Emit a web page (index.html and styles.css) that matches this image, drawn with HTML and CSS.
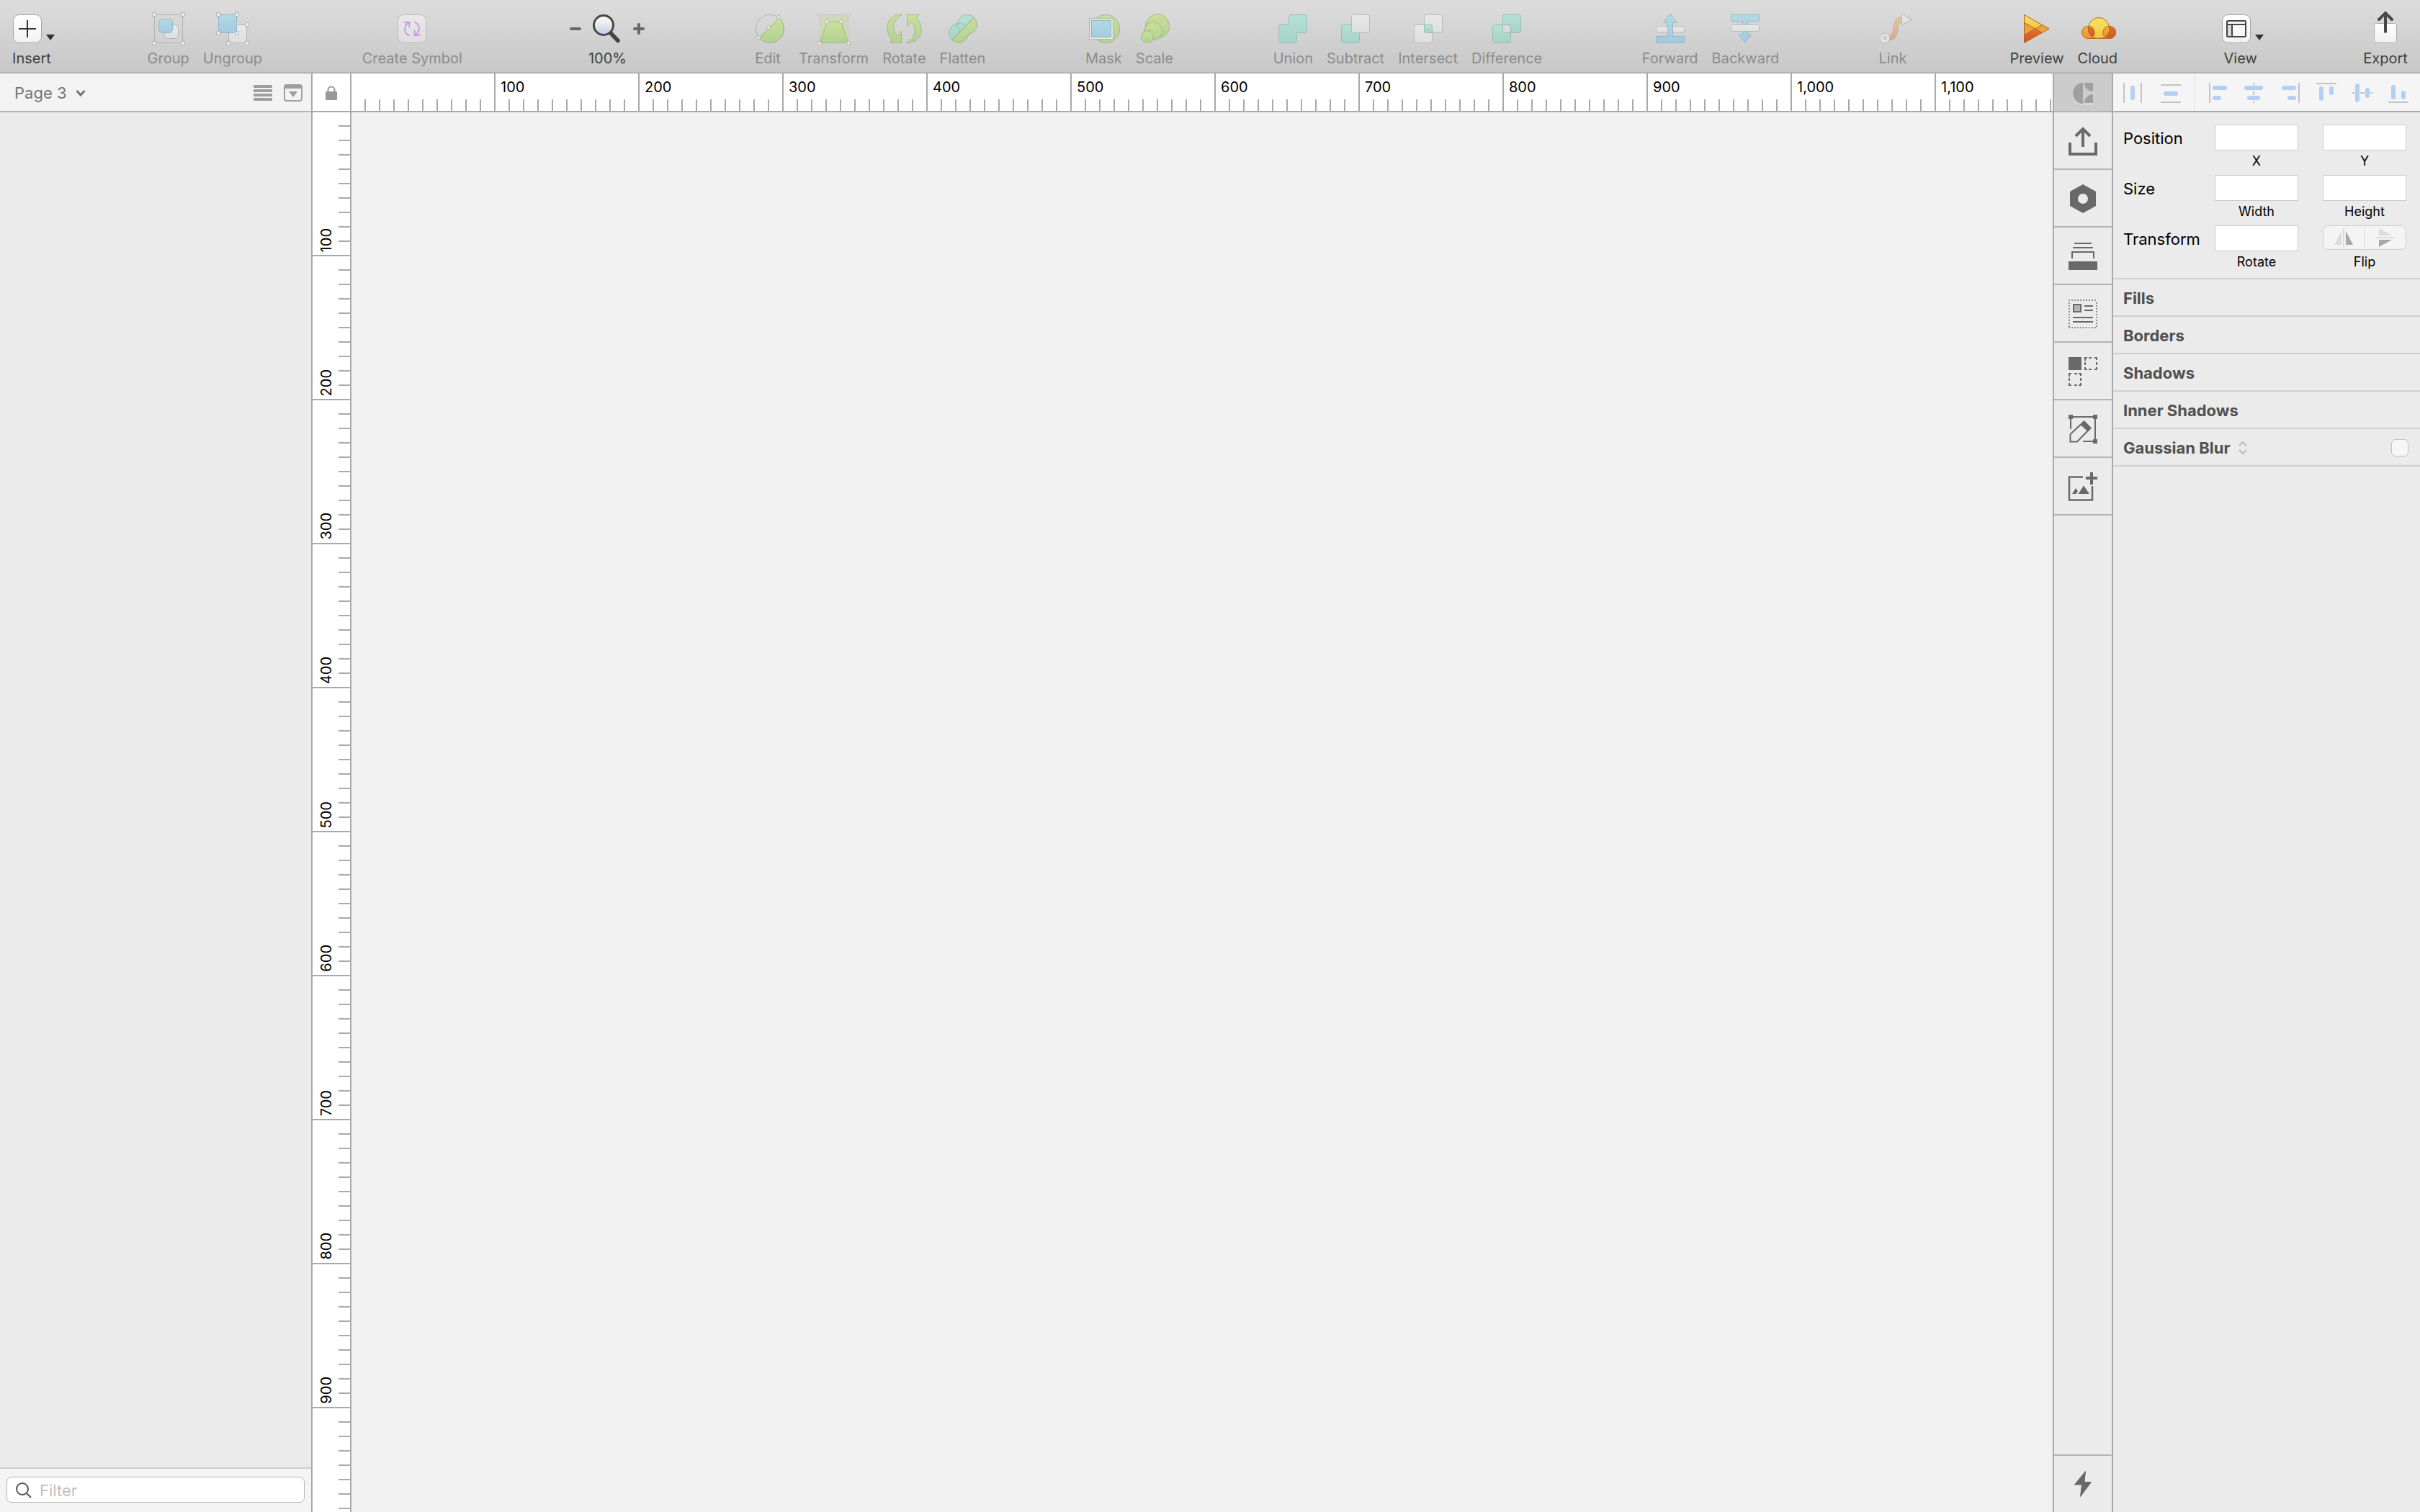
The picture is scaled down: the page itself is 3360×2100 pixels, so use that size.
FILE: index.html
```html
<!DOCTYPE html>
<html lang="en">
<head>
<meta charset="utf-8">
<title>Untitled – Page 3</title>
<link rel="stylesheet" href="styles.css">
</head>
<body>
<svg class="defs" aria-hidden="true">
  <defs>
    <linearGradient id="white" x1="0" y1="0" x2="0" y2="1"><stop offset="0" stop-color="#ffffff"/><stop offset="1" stop-color="#f1f1f1"/></linearGradient>
    <linearGradient id="grey" x1="0" y1="0" x2="0" y2="1"><stop offset="0" stop-color="#e9e9e9"/><stop offset="1" stop-color="#dedede"/></linearGradient>
    <linearGradient id="blue" x1="0" y1="0" x2="0" y2="1"><stop offset="0" stop-color="#b2dae3"/><stop offset="1" stop-color="#a3c9e2"/></linearGradient>
    <linearGradient id="green" x1="0" y1="0" x2="0" y2="1"><stop offset="0" stop-color="#cbdf9a"/><stop offset="1" stop-color="#b2d193"/></linearGradient>
    <linearGradient id="teal" x1="0" y1="0" x2="0" y2="1"><stop offset="0" stop-color="#b6e2d6"/><stop offset="1" stop-color="#a6d2c6"/></linearGradient>
    <linearGradient id="link" x1="0" y1="0" x2="0" y2="1"><stop offset="0" stop-color="#e2c795"/><stop offset="1" stop-color="#e0a98c"/></linearGradient>
    <linearGradient id="yellow" x1="0" y1="0" x2="0" y2="1"><stop offset="0" stop-color="#fbe263"/><stop offset="1" stop-color="#f3c444"/></linearGradient>
    <linearGradient id="orange" x1="0" y1="0" x2="0" y2="1"><stop offset="0" stop-color="#f2b23c"/><stop offset="1" stop-color="#ef9030"/></linearGradient>
    <linearGradient id="red" x1="0" y1="0" x2="0" y2="1"><stop offset="0" stop-color="#dd742d"/><stop offset="1" stop-color="#d25623"/></linearGradient>
    <linearGradient id="lens" x1="0" y1="0" x2="0" y2="1"><stop offset="0" stop-color="#ffffff"/><stop offset=".5" stop-color="#e6e7ea"/><stop offset="1" stop-color="#b9cff0"/></linearGradient>
    <clipPath id="flat-half"><path d="M44 4.500L6 43V48H48V4z"/></clipPath>
  </defs>
</svg>

<header class="toolbar">
  <div class="group insert">
    <button class="tool">
      <svg class="wide" viewBox="0 0 64 48"><rect x="6.500" y="4.500" width="39" height="39" rx="8" fill="url(#white)" stroke="#a3a3a3"/><path d="M14 24H38M26 12V36" stroke="#333" stroke-width="2"/><path d="M52 32H64L58 40z" fill="#333"/></svg>
      Insert
    </button>
  </div>
  <div class="group">
    <button class="tool" disabled>
      <svg viewBox="0 0 48 48" stroke="#b4b4b4"><rect x="4.500" y="4.500" width="39" height="39" fill="none"/><rect x="18.500" y="18.500" width="19" height="19" rx="5" fill="url(#grey)"/><rect x="10.500" y="10.500" width="19" height="19" rx="5" fill="url(#blue)" stroke="#95b7c8"/><path fill="#ebebeb" d="M1.500 1.500h5v5h-5zM41.500 1.500h5v5h-5zM1.500 41.500h5v5h-5zM41.500 41.500h5v5h-5z"/></svg>
      Group
    </button>
    <button class="tool" disabled>
      <svg viewBox="0 0 48 48" stroke="#b4b4b4"><rect x="18.500" y="18.500" width="25" height="25" fill="url(#grey)"/><rect x="4.500" y="4.500" width="25" height="25" fill="url(#blue)" stroke="#95b7c8"/><path fill="#ebebeb" d="M1.500 1.500h5v5h-5zM27.500 1.500h5v5h-5zM1.500 27.500h5v5h-5zM27.500 27.500h5v5h-5zM41.500 15.500h5v5h-5zM15.500 41.500h5v5h-5zM41.500 41.500h5v5h-5z"/></svg>
      Ungroup
    </button>
  </div>
  <div class="group">
    <button class="tool" disabled>
      <svg viewBox="0 0 48 48"><rect x="4.500" y="4.500" width="39" height="39" rx="8" fill="url(#grey)" stroke="#bababa"/><path d="M12.500 15H20.500V22.500M20.500 15C12 19 12 30 20.500 33.500M35.500 33H27.500V25.500M27.500 33C36 29 36 18 27.500 14.500" fill="none" stroke="#cb9bdc" stroke-width="2"/></svg>
      Create Symbol
    </button>
  </div>
  <div class="zoom">
    <div class="zoom-row">
      <button class="step" aria-label="Zoom out"><svg viewBox="0 0 16 16"><path d="M2 8H14" stroke="#666" stroke-width="4" stroke-linecap="round"/></svg></button>
      <svg viewBox="0 0 48 48"><path d="M28 29L39 40.500" stroke="#444" stroke-width="5.500" stroke-linecap="round"/><circle cx="19" cy="19" r="13.500" fill="url(#lens)" stroke="#474747" stroke-width="3"/></svg>
      <button class="step" aria-label="Zoom in"><svg viewBox="0 0 16 16"><path d="M2 8H14M8 2V14" stroke="#666" stroke-width="4" stroke-linecap="round"/></svg></button>
    </div>
    <span>100%</span>
  </div>
  <div class="group">
    <button class="tool" disabled>
      <svg viewBox="0 0 48 48" stroke="#b2b2b2"><circle cx="27" cy="24" r="19.500" fill="none"/><path d="M39.500 9A19.500 19.500 0 1 1 12 36.500z" fill="url(#green)" stroke="#a3b78a"/><g fill="#e8e8e8"><circle cx="39" cy="8" r="2.500"/><circle cx="25" cy="22" r="2.500"/><circle cx="11" cy="36" r="2.500"/></g></svg>
      Edit
    </button>
    <button class="tool" disabled>
      <svg viewBox="0 0 48 48" stroke="#b2b2b2"><rect x="4.500" y="4.500" width="39" height="39" fill="#d0d8b9" stroke="#c3c8b6"/><path d="M14 14.500H34L43.500 43.500H4.500z" fill="url(#green)" stroke="#a3b78a"/><g fill="#dcdcdc" stroke="#c6c6c6"><circle cx="4" cy="4" r="2.500"/><circle cx="44" cy="4" r="2.500"/></g><g fill="#ededed"><circle cx="14" cy="14" r="2.500"/><circle cx="34" cy="14" r="2.500"/><circle cx="4" cy="44" r="2.500"/><circle cx="44" cy="44" r="2.500"/></g></svg>
      Transform
    </button>
    <button class="tool" disabled>
      <svg viewBox="0 0 48 48" fill="url(#green)" stroke="#a3b78a"><path d="M21.500 4.500C9 3 0 13 1 24C1.500 31 4 36 8.500 39.500L4 43.500H20.500V27.500L15 34C7 26 8 10 21.500 4.500z"/><path d="M27.500 43.500C40 45 49 35 48 24C47.500 17 45 12 40.500 8.500L45 4.500H28.500V20.500L34 14C42 22 41 38 27.500 43.500z"/></svg>
      Rotate
    </button>
    <button class="tool" disabled>
      <svg viewBox="0 0 48 48"><path d="M17.500 16.500A13.500 13.500 0 1 1 32.500 31.500A13.500 13.500 0 1 1 17.500 16.500z" fill="url(#teal)" stroke="#96bdb3"/><path d="M17.500 16.500A13.500 13.500 0 0 1 32.500 31.500A13.500 13.500 0 0 1 17.500 16.500z" fill="none" stroke="#96bdb3"/><path d="M17.500 16.500A13.500 13.500 0 1 1 32.500 31.500A13.500 13.500 0 1 1 17.500 16.500z" fill="url(#green)" stroke="#a3b78a" clip-path="url(#flat-half)"/><path d="M40 8.500L10 39" stroke="#93a987"/></svg>
      Flatten
    </button>
  </div>
  <div class="group">
    <button class="tool" disabled>
      <svg viewBox="0 0 48 48"><circle cx="27" cy="24" r="19.500" fill="url(#green)" stroke="#a3b78a"/><rect x="6" y="11" width="30" height="26" fill="url(#blue)" stroke="#e3ebdf" stroke-width="3"/><rect x="4.500" y="9.500" width="33" height="29" fill="none" stroke="#aeb5aa"/><rect x="7.500" y="12.500" width="27" height="23" fill="none" stroke="#92b2c8"/></svg>
      Mask
    </button>
    <button class="tool" disabled>
      <svg viewBox="0 0 48 48" fill="url(#green)" stroke="#a3b78a"><circle cx="28" cy="20.500" r="16.500"/><circle cx="22" cy="27" r="12.500"/><circle cx="14" cy="35" r="8.500"/></svg>
      Scale
    </button>
  </div>
  <div class="group">
    <button class="tool" disabled>
      <svg viewBox="0 0 48 48"><path d="M21.500 4.500H40.500a3 3 0 0 1 3 3V26.500a3 3 0 0 1-3 3H29.500V40.500a3 3 0 0 1-3 3H7.500a3 3 0 0 1-3-3V21.500a3 3 0 0 1 3-3H18.500V7.500a3 3 0 0 1 3-3z" fill="url(#teal)" stroke="#96bdb3"/></svg>
      Union
    </button>
    <button class="tool" disabled>
      <svg viewBox="0 0 48 48"><rect x="4.500" y="18.500" width="25" height="25" rx="3" fill="url(#teal)" stroke="#96bdb3"/><rect x="18.500" y="4.500" width="25" height="25" rx="3" fill="url(#grey)" stroke="#b9b9b9"/></svg>
      Subtract
    </button>
    <button class="tool" disabled>
      <svg viewBox="0 0 48 48"><g fill="url(#grey)" stroke="#b9b9b9"><rect x="18.500" y="4.500" width="25" height="25" rx="3"/><rect x="4.500" y="18.500" width="25" height="25" rx="3"/></g><path d="M18.500 18.500H26.500a3 3 0 0 1 3 3V29.500H21.500a3 3 0 0 1-3-3z" fill="url(#teal)" stroke="#96bdb3"/></svg>
      Intersect
    </button>
    <button class="tool" disabled>
      <svg viewBox="0 0 48 48"><g fill="url(#teal)" stroke="#96bdb3"><rect x="18.500" y="4.500" width="25" height="25" rx="3"/><rect x="4.500" y="18.500" width="25" height="25" rx="3"/></g><path d="M18.500 18.500H26.500a3 3 0 0 1 3 3V29.500H21.500a3 3 0 0 1-3-3z" fill="#dadada" stroke="#96bdb3"/></svg>
      Difference
    </button>
  </div>
  <div class="group">
    <button class="tool" disabled>
      <svg viewBox="0 0 48 48"><rect x="4.500" y="20.500" width="39" height="8.500" rx="1" fill="url(#grey)" stroke="#b9b9b9"/><path d="M24 3L33.500 15.500H27.500V34.500H43.500V43.500H4.500V34.500H20.500V15.500H14.500z" fill="url(#blue)" stroke="#95b7c8"/></svg>
      Forward
    </button>
    <button class="tool" disabled>
      <svg viewBox="0 0 48 48"><path d="M4.500 4.500H43.500V13.500H27.500V32.500H33L24 43L15 32.500H20.500V13.500H4.500z" fill="url(#blue)" stroke="#95b7c8"/><rect x="4.500" y="18.500" width="39" height="9" rx="1" fill="url(#grey)" stroke="#b9b9b9"/></svg>
      Backward
    </button>
  </div>
  <div class="group link">
    <button class="tool" disabled>
      <svg viewBox="0 0 48 48" fill="none"><path d="M18 37C34 37 22 11 37 11" stroke="#b9aa9c" stroke-width="7"/><path d="M18 37C34 37 22 11 37 11" stroke="url(#link)" stroke-width="5.500"/><circle cx="13" cy="37" r="4.500" stroke="#b4b4b4" stroke-width="5"/><circle cx="13" cy="37" r="4.500" stroke="#e6e6e6" stroke-width="3.500"/><path d="M36.500 3.500L50 11L36.500 18.500z" fill="url(#grey)" stroke="#b4b4b4"/></svg>
      Link
    </button>
  </div>
  <div class="group">
    <button class="tool">
      <svg viewBox="0 0 48 48"><path d="M6.500 4.500L41 24L6.500 43.500z" fill="#efa13a"/><path d="M6.500 4.500L31.500 18.500L22.500 24L6.500 15.500z" fill="url(#yellow)"/><path d="M6.500 43.500L31.500 29.500L22.500 24L6.500 32.500z" fill="url(#red)"/><path d="M6.500 4.500L41 24L6.500 43.500zM6.500 15.500L31.500 29.500M6.500 32.500L31.500 18.500" fill="none" stroke="#a9662a"/></svg>
      Preview
    </button>
    <button class="tool">
      <svg viewBox="0 0 48 48"><g stroke="#b56c25"><path d="M11 20.500H41a8.500 8.500 0 0 1 0 17H11a8.500 8.500 0 0 1 0-17z" fill="url(#orange)"/><circle cx="41" cy="29" r="8.500" fill="url(#red)"/><circle cx="26" cy="23" r="14.500" fill="url(#yellow)"/><path d="M11.800 20.500A8.500 8.500 0 0 1 17 35.500A14.500 14.500 0 0 1 11.800 20.500z" fill="url(#red)"/><path d="M40.200 20.500A8.500 8.500 0 0 0 35 35.500A14.500 14.500 0 0 0 40.200 20.500z" fill="url(#orange)"/></g></svg>
      Cloud
    </button>
  </div>
  <div class="group">
    <button class="tool">
      <svg class="wide" viewBox="0 0 64 48"><rect x="6.500" y="4.500" width="39" height="39" rx="8" fill="url(#white)" stroke="#a3a3a3"/><rect x="13" y="18" width="6" height="17" fill="#d9d9d9"/><rect x="13" y="13" width="26" height="22" rx="1" fill="none" stroke="#444" stroke-width="2"/><path d="M13 18H39M20 18V35" stroke="#444" stroke-width="2"/><path d="M52 32H64L58 40z" fill="#333"/></svg>
      View
    </button>
  </div>
  <div class="group">
    <button class="tool">
      <svg viewBox="0 0 48 48"><rect x="8.500" y="16.500" width="31" height="27" rx="3" fill="url(#white)" stroke="#a9a9a9"/><path d="M24 28V3M15 11L24 2L33 11" fill="none" stroke="#484848" stroke-width="4" stroke-linecap="round"/></svg>
      Export
    </button>
  </div>
</header>

<main class="workspace">
  <aside class="sidebar">
    <div class="page-bar">
      <button class="page-picker">Page 3
        <svg viewBox="0 0 14 10"><path d="M1.500 2L7 8L12.500 2" fill="none" stroke="#777" stroke-width="3"/></svg>
      </button>
      <button class="mini" aria-label="Layer list"><svg viewBox="0 0 28 24" fill="#9f9f9f"><rect x="1" y="1" width="26" height="4" rx="1"/><rect x="1" y="7" width="26" height="4"/><rect x="1" y="13" width="26" height="4"/><rect x="1" y="19" width="26" height="4" rx="1"/></svg></button>
      <button class="mini" aria-label="Collapse pages"><svg viewBox="0 0 28 24"><rect x="2" y="1" width="24" height="22" rx="3" fill="none" stroke="#9f9f9f" stroke-width="2"/><path d="M2 1H26V6H2zM8 10H20L14 18z" fill="#9f9f9f"/></svg></button>
    </div>
    <div class="layers"></div>
    <div class="filter-bar">
      <label class="filter">
        <svg viewBox="0 0 22 22" fill="none" stroke="#555" stroke-width="2"><circle cx="9" cy="9" r="8"/><path d="M15 15L21 21"/></svg>
        <input type="text" placeholder="Filter" aria-label="Filter layers">
      </label>
    </div>
  </aside>

  <section class="stage">
    <button class="lock" aria-label="Lock rulers"><svg viewBox="0 0 16 20"><path d="M3.500 9V6a4.500 4.500 0 0 1 9 0V9" fill="none" stroke="#999" stroke-width="2"/><rect y="8" width="16" height="12" rx="1" fill="#999"/></svg></button>
    <div class="ruler ruler-x">
      <span>100</span><span>200</span><span>300</span><span>400</span><span>500</span><span>600</span><span>700</span><span>800</span><span>900</span><span>1,000</span><span>1,100</span>
    </div>
    <div class="ruler ruler-y">
      <div><span>100</span></div><div><span>200</span></div><div><span>300</span></div><div><span>400</span></div><div><span>500</span></div><div><span>600</span></div><div><span>700</span></div><div><span>800</span></div><div><span>900</span></div>
    </div>
    <div class="canvas"></div>
  </section>

  <nav class="plugins">
    <button class="brand" aria-label="Craft"><svg viewBox="0 0 40 40"><g fill="#d9d9d9"><path d="M20 8A14 14 0 0 0 20 37zM22 37A13 13 0 0 1 34 24V37z"/></g><g fill="#a0a0a0"><path d="M20 6A14 14.500 0 0 0 20 35zM22 6H34V18A12 12 0 0 1 22 6zM22 34A12 12 0 0 1 34 22V34z"/></g></svg></button>
    <button aria-label="Sync"><svg viewBox="0 0 40 40" fill="none" stroke="#696969" stroke-width="4"><path d="M20 28V3M10 13L20 3L30 13M2 22V38H38V22"/></svg></button>
    <button aria-label="Prototype"><svg viewBox="0 0 40 40"><path d="M20 0L38 10V30L20 40L2 30V10zM20 13a7 7 0 1 0 0 14a7 7 0 1 0 0-14z" fill="#696969" fill-rule="evenodd"/></svg></button>
    <button aria-label="Stock"><svg viewBox="0 0 40 40" fill="none" stroke="#696969" stroke-width="2"><path d="M8 2H32M6 8H34M5 23V14H35V23"/><rect y="27" width="40" height="12" fill="#696969" stroke="none"/></svg></button>
    <button aria-label="Data"><svg viewBox="0 0 40 40" fill="none" stroke="#696969" stroke-width="2"><path d="M0 1H40M0 39H40M1 4V38M39 4V38" stroke="#8d8d8d" stroke-dasharray="2 2"/><rect x="7" y="7" width="10" height="10" fill="#b5b5b5"/><path d="M22 9H34M22 15H34M6 25H34M6 31H34"/></svg></button>
    <button aria-label="Duplicate"><svg viewBox="0 0 40 40" fill="none" stroke="#696969" stroke-width="2"><rect width="18" height="18" fill="#696969" stroke="none"/><path d="M23 5V1H26M28 1H32M36 1H39V4M39 7V11M39 14V17H36M32 17H28M26 17H23V14M23 11V7"/><path d="M1 27V23H4M8 23H12M14 23H17V26M17 29V33M17 36V39H14M12 39H8M4 39H1V36M1 33V29"/></svg></button>
    <button aria-label="Freehand"><svg viewBox="0 0 40 40" fill="none" stroke="#696969" stroke-width="2"><path d="M6 3H34M3 6V20M37 6V34M20 37H34"/><path d="M0 0h6v6H0zM34 0h6v6h-6zM34 34h6v6h-6zM21.500 8L32 18.500L27 23.500L16 13.500z" fill="#696969" stroke="none"/><path d="M2.500 27L21.500 9.500L30.500 18.500L12 37.500H2.500z"/></svg></button>
    <button aria-label="Library"><svg viewBox="0 0 40 40" fill="none" stroke="#696969"><path d="M20 6.500H1V38.500H33V19" stroke-width="2.500"/><path d="M24 8H40M32 0V17" stroke-width="4"/><path d="M21 18.500L13.500 30H29zM10 22L5 30H10.500L13 26z" fill="#696969" stroke="none"/></svg></button>
    <div class="spacer"></div>
    <button class="bolt" aria-label="Runner"><svg viewBox="0 0 40 40"><path d="M23.500 2.500L8.500 21H18.500L16.500 37.500L31.500 17.500H22z" fill="#696969" stroke="#696969" stroke-linejoin="round"/></svg></button>
  </nav>

  <aside class="inspector">
    <div class="align-bar">
      <div class="distribute">
        <button aria-label="Distribute horizontally"><svg viewBox="0 0 28 28"><path class="guide" d="M1 0V28M25 0V28"/><rect x="10" y="4" width="6" height="20" rx="3"/></svg></button>
        <button aria-label="Distribute vertically"><svg viewBox="0 0 28 28"><path class="guide" d="M0 3H28M0 27H28"/><rect x="4" y="12" width="20" height="6" rx="3"/></svg></button>
      </div>
      <div class="align">
        <button aria-label="Align left"><svg viewBox="0 0 28 28"><path class="guide" d="M3 0V28"/><rect x="7" y="4" width="20" height="6" rx="3"/><rect x="7" y="18" width="12" height="6" rx="3"/></svg></button>
        <button aria-label="Align center"><svg viewBox="0 0 28 28"><path class="guide" d="M14 0V3M14 11V17M14 25V28"/><rect x="1" y="4" width="26" height="6" rx="3"/><rect x="5" y="18" width="18" height="6" rx="3"/></svg></button>
        <button aria-label="Align right"><svg viewBox="0 0 28 28"><path class="guide" d="M27 0V28"/><rect x="3" y="4" width="20" height="6" rx="3"/><rect x="11" y="18" width="12" height="6" rx="3"/></svg></button>
        <button aria-label="Align top"><svg viewBox="0 0 28 28"><path class="guide" d="M0 1H28"/><rect x="4" y="5" width="6" height="20" rx="3"/><rect x="18" y="5" width="6" height="12" rx="3"/></svg></button>
        <button aria-label="Align middle"><svg viewBox="0 0 28 28"><path class="guide" d="M0 14H3M11 14H17M25 14H28"/><rect x="4" y="1" width="6" height="26" rx="3"/><rect x="18" y="7" width="6" height="14" rx="3"/></svg></button>
        <button aria-label="Align bottom"><svg viewBox="0 0 28 28"><path class="guide" d="M0 27H28"/><rect x="4" y="3" width="6" height="20" rx="3"/><rect x="18" y="11" width="6" height="12" rx="3"/></svg></button>
      </div>
    </div>
    <div class="geometry">
      <span class="row-name">Position</span>
      <label class="field"><input type="text"><span>X</span></label>
      <label class="field"><input type="text"><span>Y</span></label>
      <span class="row-name">Size</span>
      <label class="field"><input type="text"><span>Width</span></label>
      <label class="field"><input type="text"><span>Height</span></label>
      <span class="row-name">Transform</span>
      <label class="field"><input type="text"><span>Rotate</span></label>
      <div class="field">
        <div class="flip">
          <button aria-label="Flip horizontal"><svg viewBox="0 0 28 28"><path d="M11 5V24H1z" fill="#dcdcdc"/><path d="M14 1V27" stroke="#dcdcdc" stroke-width="2"/><path d="M17 5V24H27z" fill="#a8a8a8"/></svg></button>
          <button aria-label="Flip vertical"><svg viewBox="0 0 28 28"><path d="M5 1V11H23z" fill="#dcdcdc"/><path d="M1 14H27" stroke="#dcdcdc" stroke-width="2"/><path d="M5 17V27L23 17z" fill="#a8a8a8"/></svg></button>
        </div>
        <span>Flip</span>
      </div>
    </div>
    <h2 class="section">Fills</h2>
    <h2 class="section">Borders</h2>
    <h2 class="section">Shadows</h2>
    <h2 class="section">Inner Shadows</h2>
    <div class="section">
      <label for="blur">Gaussian Blur</label>
      <svg viewBox="0 0 12 20"><path d="M1 7L6 2L11 7M1 13L6 18L11 13" fill="none" stroke="#bcbcbc" stroke-width="2"/></svg>
      <input type="checkbox" id="blur">
    </div>
  </aside>
</main>
</body>
</html>
```
FILE: styles.css
```css
* { box-sizing: border-box; }

body {
  margin: 0;
  min-height: 100vh;
  display: flex;
  flex-direction: column;
  background: #ebebeb;
  color: #000;
  font: 22px/26px Inter, "Liberation Sans", sans-serif;
}

button {
  margin: 0;
  padding: 0;
  border: 0;
  background: none;
  color: inherit;
  font: inherit;
}

svg { display: block; flex: none; overflow: visible; }
.defs { position: absolute; width: 0; height: 0; }

/* Toolbar */
.toolbar {
  display: flex;
  justify-content: space-between;
  padding: 16px 17px 7px 12px;
  border-bottom: 1px solid #a0a0a0;
  box-shadow: inset 0 -1px #bababa;
  background: linear-gradient(#dddddd, #c7c7c7);
  color: #404040;
  font-size: 20px;
}
.group { display: flex; gap: 19px; }
.group.insert { margin-right: -10px; }
.group.link { margin-left: -5px; }
.tool {
  display: flex;
  flex-direction: column;
  align-items: center;
  gap: 4px;
  white-space: nowrap;
}
.tool:disabled { color: #8c8c8c; }
.tool svg, .zoom-row > svg { width: 48px; height: 48px; }
.tool svg.wide { width: 64px; }
.zoom {
  display: flex;
  flex-direction: column;
  align-items: center;
  gap: 4px;
  margin: 0 8px 0 11px;
}
.zoom-row { display: flex; align-items: center; gap: 12px; }
.step svg { width: 16px; height: 16px; }

/* Workspace columns */
.workspace { flex: 1; display: flex; }

.sidebar {
  flex: none;
  width: 434px;
  display: flex;
  flex-direction: column;
  border-right: 2px solid #a9a9a9;
}
.page-bar {
  display: flex;
  align-items: center;
  gap: 14px;
  height: 54px;
  padding: 2px 11px 0 20px;
  border-bottom: 2px solid #b2b2b2;
  background: #f3f3f3;
  color: #747474;
}
.page-picker { display: flex; align-items: center; gap: 12px; margin-right: auto; }
.page-picker svg { width: 14px; height: 10px; }
.mini svg { width: 28px; height: 24px; }
.layers { flex: 1; }
.filter-bar {
  padding: 11px 9px 13px;
  border-top: 2px solid #cfcfcf;
  background: #f4f4f4;
}
.filter {
  display: flex;
  align-items: center;
  gap: 11px;
  height: 36px;
  padding: 2px 12px 0;
  border: 1px solid #b5b5b5;
  border-radius: 7px;
  background: #fff;
}
.filter svg { width: 22px; height: 22px; }
.filter input {
  flex: 1;
  min-width: 0;
  padding: 0;
  border: 0;
  outline: 0;
  background: none;
  font: inherit;
}
.filter input::placeholder { color: #bfbfbf; }

/* Canvas and rulers */
.stage {
  flex: 1;
  min-width: 0;
  display: grid;
  grid-template: 54px 1fr / 54px 1fr;
}
.lock {
  display: flex;
  align-items: center;
  justify-content: center;
  padding-top: 2px;
  border: solid #a9a9a9;
  border-width: 0 2px 2px 0;
  background: #fff;
}
.lock svg { width: 16px; height: 20px; }
.ruler {
  display: flex;
  overflow: hidden;
  font-size: 20px;
  line-height: 24px;
}
.ruler-x {
  padding-left: 198px;
  border-bottom: 2px solid #a9a9a9;
  background: linear-gradient(90deg, transparent 18px, #a9a9a9 18px) 0 100% / 20px 16px repeat-x #fff;
}
.ruler-x span {
  flex: none;
  width: 200px;
  padding: 7px 0 0 7px;
  border-left: 2px solid #a9a9a9;
}
.ruler-y {
  flex-direction: column;
  border-right: 2px solid #a9a9a9;
  background: linear-gradient(transparent 18px, #a9a9a9 18px) 100% 0 / 16px 20px repeat-y #fff;
}
.ruler-y div {
  flex: none;
  display: flex;
  align-items: flex-end;
  height: 200px;
  padding: 0 0 4px 7px;
  border-bottom: 2px solid #a9a9a9;
}
.ruler-y span { writing-mode: vertical-rl; transform: rotate(180deg); }
.canvas { background: #f1f1f1; }

/* Plugin strip */
.plugins {
  flex: none;
  width: 82px;
  display: flex;
  flex-direction: column;
  border-left: 2px solid #a9a9a9;
}
.plugins button {
  display: flex;
  align-items: center;
  justify-content: center;
  height: 80px;
  padding-top: 2px;
  border-bottom: 2px solid #b4b4b4;
}
.plugins svg { width: 40px; height: 40px; }
.plugins .brand { height: 54px; background: #cccccc; }
.plugins .bolt { padding: 0; border-bottom: 0; border-top: 2px solid #b4b4b4; }
.spacer { flex: 1; }

/* Inspector */
.inspector { flex: none; width: 428px; border-left: 2px solid #a9a9a9; }
.align-bar {
  display: flex;
  height: 54px;
  border-bottom: 2px solid #a9a9a9;
  background: #f5f5f5;
}
.align-bar svg { width: 28px; height: 28px; fill: #b3cff5; }
.align-bar .guide { stroke: #c3c3c3; stroke-width: 2; }
.distribute, .align { display: flex; align-items: center; padding-top: 2px; }
.distribute { gap: 24px; padding-left: 14px; padding-right: 18px; border-right: 2px solid #ebebeb; }
.align { flex: 1; justify-content: space-between; padding-left: 17px; padding-right: 16px; }

.geometry {
  display: grid;
  grid-template-columns: 1fr 116px 116px;
  column-gap: 34px;
  row-gap: 8px;
  padding: 17px 19px 11px 14px;
  border-bottom: 2px solid #cfcfcf;
}
.row-name { margin-right: -34px; line-height: 38px; }
.field {
  display: flex;
  flex-direction: column;
  gap: 4px;
  font-size: 18px;
  line-height: 22px;
  text-align: center;
}
.field input {
  width: 100%;
  height: 36px;
  padding: 0 6px;
  border: 1px solid #cbcbcb;
  background: #fff;
  font-size: 22px;
}
.flip {
  display: flex;
  height: 34px;
  margin-bottom: 2px;
  border: 1px solid #cdcdcd;
  border-radius: 7px;
  background: #f4f4f4;
}
.flip button { flex: 1; display: flex; align-items: center; justify-content: center; }
.flip button + button { border-left: 1px solid #dedede; }
.flip svg { width: 28px; height: 28px; }

.section {
  display: flex;
  align-items: center;
  height: 52px;
  margin: 0;
  padding: 2px 16px 0 14px;
  border-bottom: 2px solid #cfcfcf;
  color: #505050;
  font-size: 22px;
  font-weight: 700;
}
.section svg { width: 12px; height: 20px; margin-left: 12px; }
.section input {
  appearance: none;
  width: 24px;
  height: 24px;
  margin: 0 0 0 auto;
  border: 1px solid #c3c3c3;
  border-radius: 6px;
  background: #f6f6f6;
}
```
